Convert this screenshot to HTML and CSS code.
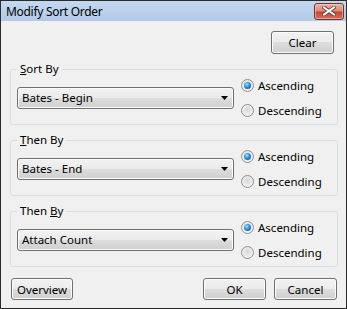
FILE: index.html
```html
<!DOCTYPE html>
<html lang="en">
<head>
    <meta charset="UTF-8">
    <title>Modify Sort Order</title>
    <link rel="stylesheet" href="styles.css">
</head>
<body>
    <div class="window">
        <div class="titlebar">
            <span class="title">Modify Sort Order</span>
            <span class="close">
                <svg width="14" height="10" viewBox="0 0 14 10">
                    <path d="M2 1.5L12 8.5M12 1.5L2 8.5" stroke="#5b3a36" stroke-width="3.6" stroke-linecap="square"/>
                    <path d="M2 1.5L12 8.5M12 1.5L2 8.5" stroke="#fff" stroke-width="2" stroke-linecap="square"/>
                </svg>
            </span>
        </div>
        <div class="client">
            <div class="toprow">
                <button class="btn">Clear</button>
            </div>

            <fieldset class="group">
                <legend><u>S</u>ort By</legend>
                <div class="row">
                    <div class="select">
                        <span>Bates - Begin</span>
                        <svg width="7" height="4" viewBox="0 0 7 4"><path d="M0 0H7L3.5 4Z"/></svg>
                    </div>
                    <div class="radios">
                        <label class="radio"><span class="dot on"></span>Ascending</label>
                        <label class="radio"><span class="dot"></span>Descending</label>
                    </div>
                </div>
            </fieldset>

            <fieldset class="group">
                <legend><u>T</u>hen By</legend>
                <div class="row">
                    <div class="select">
                        <span>Bates - End</span>
                        <svg width="7" height="4" viewBox="0 0 7 4"><path d="M0 0H7L3.5 4Z"/></svg>
                    </div>
                    <div class="radios">
                        <label class="radio"><span class="dot on"></span>Ascending</label>
                        <label class="radio"><span class="dot"></span>Descending</label>
                    </div>
                </div>
            </fieldset>

            <fieldset class="group">
                <legend>Then <u>B</u>y</legend>
                <div class="row">
                    <div class="select">
                        <span>Attach Count</span>
                        <svg width="7" height="4" viewBox="0 0 7 4"><path d="M0 0H7L3.5 4Z"/></svg>
                    </div>
                    <div class="radios">
                        <label class="radio"><span class="dot on"></span>Ascending</label>
                        <label class="radio"><span class="dot"></span>Descending</label>
                    </div>
                </div>
            </fieldset>

            <div class="footer">
                <button class="btn small overview">Overview</button>
                <div class="spacer"></div>
                <button class="btn small">OK</button>
                <button class="btn small">Cancel</button>
            </div>
        </div>
    </div>
</body>
</html>
```
FILE: styles.css
```css
* {
    margin: 0;
    padding: 0;
    box-sizing: border-box;
}
body {
    font-family: "Noto Sans", "Liberation Sans", sans-serif;
    font-size: 11.5px;
    color: #000;
    background: #fff;
}
.window {
    width: 347px;
    height: 309px;
    border: 1px solid #2b2b2b;
    display: flex;
    flex-direction: column;
    background: #f0f0f0;
}
.titlebar {
    height: 21px;
    display: flex;
    align-items: center;
    justify-content: space-between;
    padding: 0 2px 0 5px;
    background: linear-gradient(#c4d8ef, #b2cae8);
}
.title {
    font-size: 12px;
    letter-spacing: -0.3px;
}
.close {
    width: 30px;
    height: 17px;
    border: 1px solid #6e3530;
    border-radius: 3px;
    background: linear-gradient(#eab3a6, #dc8a78 45%, #c5452f 55%, #d4705f);
    box-shadow: inset 0 0 0 1px rgba(255, 220, 210, 0.5);
    display: flex;
    align-items: center;
    justify-content: center;
}
.client {
    flex: 1;
    padding: 10px 8px 8px 9px;
}
.toprow {
    display: flex;
    justify-content: flex-end;
    padding-right: 4px;
    margin-bottom: 8px;
}
.btn {
    width: 63px;
    height: 23px;
    font: inherit;
    color: #000;
    border: 1px solid #707070;
    border-radius: 3px;
    background: linear-gradient(#f2f2f2, #ebebeb 50%, #dddddd 50%, #cfcfcf);
    box-shadow: inset 0 0 0 1px #fbfbfb;
}
.btn.small {
    height: 22px;
}
.btn.overview {
    width: 62px;
}
.group {
    border: 1px solid #d5dfe5;
    border-radius: 3px;
    padding: 0 8px 5px 6px;
}
.group + .group {
    margin-top: 8px;
}
.group legend {
    padding: 0 3px;
    line-height: 14px;
}
.row {
    display: flex;
    align-items: center;
}
.select {
    width: 217px;
    height: 22px;
    border: 1px solid #707070;
    border-radius: 3px;
    background: linear-gradient(#f2f2f2, #ebebeb 50%, #dddddd 50%, #cfcfcf);
    box-shadow: inset 0 0 0 1px #fbfbfb;
    display: flex;
    align-items: center;
    justify-content: space-between;
    padding: 0 5px 0 4px;
    margin-right: 7px;
}
.radios {
    display: flex;
    flex-direction: column;
    gap: 7px;
}
.radio {
    height: 18px;
    display: flex;
    align-items: center;
    gap: 4px;
}
.dot {
    width: 13px;
    height: 13px;
    border-radius: 50%;
    border: 1px solid #8f8f8f;
    background: radial-gradient(circle at 50% 40%, #d6d6d6, #ececec 55%, #fafafa);
    display: flex;
    align-items: center;
    justify-content: center;
}
.dot.on::after {
    content: "";
    width: 7px;
    height: 7px;
    border-radius: 50%;
    background: radial-gradient(circle at 40% 35%, #a8e4ff, #2a8fd6 45%, #0d4b8e);
}
.footer {
    display: flex;
    gap: 8px;
    padding: 0 1px;
    margin-top: 11px;
}
.footer .spacer {
    flex: 1;
}
```
